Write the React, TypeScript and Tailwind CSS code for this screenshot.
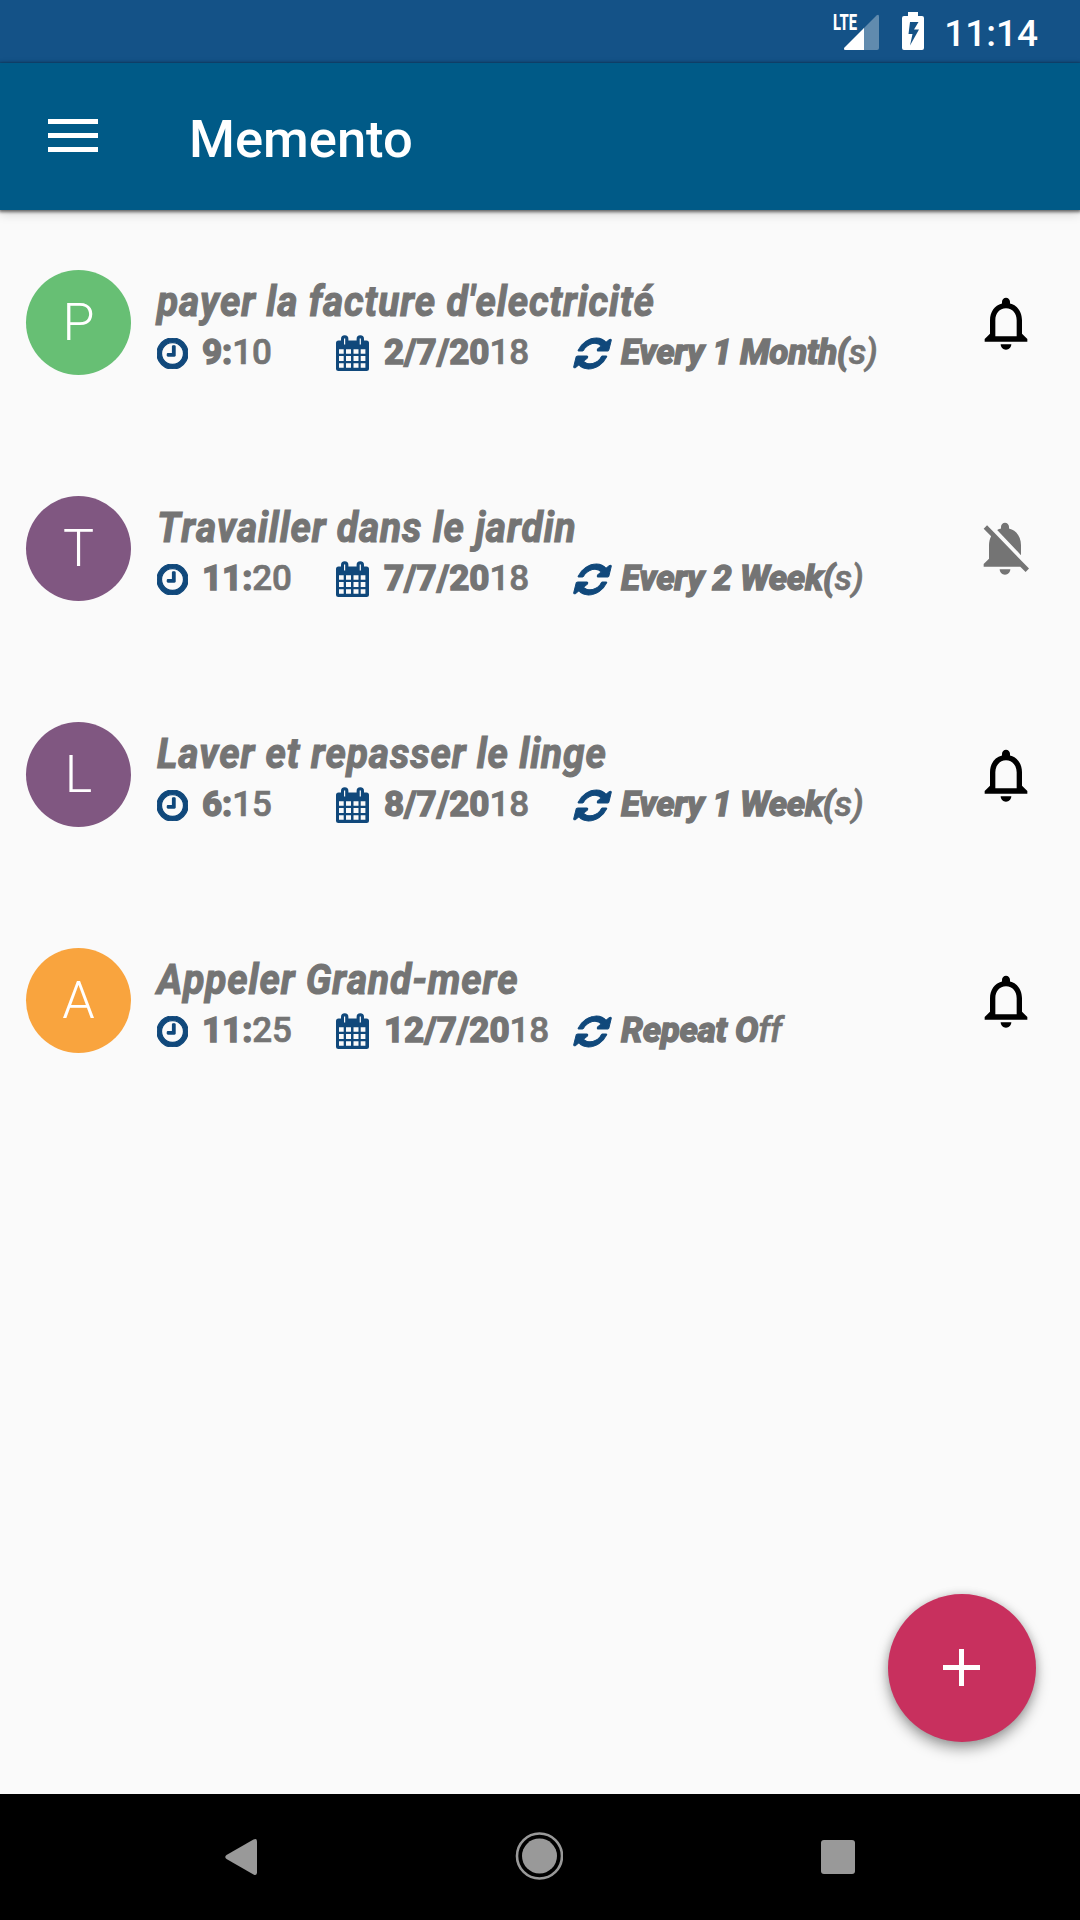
import React from 'react';

interface Reminder {
    id: number;
    letter: string;
    color: string;
    title: string;
    time: [string, string];
    date: [string, string];
    repeat: [string, string];
    active: boolean;
}

const reminders: Reminder[] = [
    { id: 1, letter: 'P', color: 'bg-[#67bf74]', title: "payer la facture d'electricité", time: ['9:', '10'], date: ['2/7/20', '18'], repeat: ['Every 1 Month(', 's)'], active: true },
    { id: 2, letter: 'T', color: 'bg-[#805781]', title: 'Travailler dans le jardin', time: ['11:', '20'], date: ['7/7/20', '18'], repeat: ['Every 2 Week(', 's)'], active: false },
    { id: 3, letter: 'L', color: 'bg-[#805781]', title: 'Laver et repasser le linge', time: ['6:', '15'], date: ['8/7/20', '18'], repeat: ['Every 1 Week(', 's)'], active: true },
    { id: 4, letter: 'A', color: 'bg-[#f9a43e]', title: 'Appeler Grand-mere', time: ['11:', '25'], date: ['12/7/20', '18'], repeat: ['Repeat O', 'ff'], active: true },
];

const ClockIcon = () => (
    <svg className="h-[31px] w-[31px] shrink-0" viewBox="0 128 1536 1536" fill="currentColor" stroke="currentColor" strokeWidth="60">
        <path d="M896 544v448q0 14-9 23t-23 9h-320q-14 0-23-9t-9-23v-64q0-14 9-23t23-9h224v-352q0-14 9-23t23-9h64q14 0 23 9t9 23zm416 352q0-148-73-273t-198-198-273-73-273 73-198 198-73 273 73 273 198 198 273 73 273-73 198-198 73-273zm224 0q0 209-103 385.5t-279.5 279.5-385.5 103-385.5-103-279.5-279.5-103-385.5 103-385.5 279.5-279.5 385.5-103 385.5 103 279.5 279.5 103 385.5z" />
    </svg>
);

const CalendarIcon = () => (
    <svg className="h-[36px] w-[33px] shrink-0" viewBox="0 0 33 36" fill="currentColor">
        <path
            fillRule="evenodd"
            d="M2.5 5.500H5V4a3.700 3.700 0 0 1 7.400 0v1.500H20.600V4a3.700 3.700 0 0 1 7.400 0v1.500H30.500A2.500 2.500 0 0 1 33 8V33.500A2.500 2.500 0 0 1 30.500 36H2.500A2.500 2.500 0 0 1 0 33.500V8A2.500 2.500 0 0 1 2.500 5.500ZM8 3.500v6h1.200v-6zM23.700 3.500v6h1.200v-6zM3 14.200v4.500h4.700v-4.500zM10 14.200v4.500h5v-4.500zM17.500 14.200v4.500h5v-4.500zM24.700 14.200v4.500h4.700v-4.500zM3 21v5h4.700v-5zM10 21v5h5v-5zM17.500 21v5h5v-5zM24.700 21v5h4.700v-5zM3 28.300v4.500h4.700v-4.500zM10 28.300v4.500h5v-4.500zM17.500 28.300v4.500h5v-4.500zM24.700 28.300v4.500h4.700v-4.500z"
        />
    </svg>
);

const RefreshIcon = () => (
    <svg className="h-[31px] w-[31px] shrink-0 -skew-x-[14deg] overflow-visible" viewBox="128 128 1536 1536" fill="currentColor" stroke="currentColor" strokeWidth="50">
        <path d="M1639 1056q0 5-1 7-64 268-268 434.500t-478 166.500q-146 0-282.500-55t-243.500-157l-129 129q-19 19-45 19t-45-19-19-45v-448q0-26 19-45t45-19h448q26 0 45 19t19 45-19 45l-137 137q71 66 161 102t187 36q134 0 250-65t186-179q11-17 53-117 8-23 30-23h192q13 0 22.500 9.500t9.500 22.500zm25-800v448q0 26-19 45t-45 19h-448q-26 0-45-19t-19-45 19-45l138-138q-148-137-349-137-134 0-250 65t-186 179q-11 17-53 117-8 23-30 23h-199q-13 0-22.500-9.500t-9.500-22.500v-7q65-268 270-434.500t480-166.500q146 0 284 55.500t245 156.500l130-129q19-19 45-19t45 19 19 45z" />
    </svg>
);

const BellIcon = () => (
    <svg className="mr-px h-16 w-16 text-black" viewBox="0 0 24 24" fill="currentColor">
        <path d="M12 22c1.100 0 2-.9 2-2h-4c0 1.100.9 2 2 2zm6-6v-5c0-3.070-1.630-5.640-4.500-6.320V4c0-.83-.67-1.500-1.500-1.500s-1.500.67-1.500 1.500v.68C7.640 5.360 6 7.920 6 11v5l-2 2v1h16v-1l-2-2zm-2 1H8v-6c0-2.480 1.510-4.500 4-4.500s4 2.020 4 4.500v6z" />
    </svg>
);

const BellOffIcon = () => (
    <svg className="mr-[2px] mb-[2px] h-16 w-16 text-[#747474]" viewBox="0 0 24 24" fill="currentColor">
        <path d="M20 18.690L7.840 6.140 5.270 3.490 4 4.760l2.800 2.800v.01c-.52.99-.8 2.160-.8 3.420v5l-2 2v1h13.730l2 2L21 19.720l-1-1.030zM12 22c1.110 0 2-.89 2-2h-4c0 1.110.89 2 2 2zm6-7.320V11c0-3.080-1.640-5.640-4.500-6.320V4c0-.83-.67-1.500-1.500-1.500s-1.500.67-1.500 1.500v.68c-.15.03-.29.08-.42.12-.1.03-.2.07-.3.11h-.01c-.01 0-.01 0-.02.01-.23.09-.46.2-.68.31 0 0-.01 0-.01.01L18 14.680z" />
    </svg>
);

// The first part is drawn heavier than the tail
const SplitText: React.FC<{ parts: [string, string] }> = ({ parts }) => (
    <>
        <span className="font-extrabold [-webkit-text-stroke:1.3px_#747474]">{parts[0]}</span>
        <span className="font-medium [-webkit-text-stroke:0.7px_#747474]">{parts[1]}</span>
    </>
);

const StatusBar = () => (
    <div className="flex h-[63px] items-start justify-end bg-[#145287] pr-[42px] text-white">
        <svg className="h-[63px] w-[46px]" viewBox="0 0 46 63" fill="currentColor">
            <path d="M46 16.500v31.500q0 2-2 2H30V29L43.500 15.500Q46 13.500 46 16.500Z" opacity="0.33" />
            <path d="M31 28V50H12.500Q10 50 11.500 47.500Z" />
            <text x="0" y="30" fontFamily="Roboto" fontWeight="800" fontSize="22.500" textLength="24" lengthAdjust="spacingAndGlyphs">LTE</text>
        </svg>
        <svg className="ml-[23px] mt-3 h-[38px] w-[22px]" viewBox="0 0 22 38" fill="currentColor">
            <path fillRule="evenodd" d="M6 0H16V4H20Q22 4 22 6V36Q22 38 20 38H2Q0 38 0 36V6Q0 4 2 4H6ZM8 10L6.500 22H10.500L8 33.500L17 17.500H12L16.500 10Z" />
        </svg>
        <span className="ml-[20px] mt-[11px] text-[37px] leading-[45px] font-medium">11:14</span>
    </div>
);

const AppBar = () => (
    <header className="relative z-10 flex h-[147px] items-center bg-[#005a87] pl-12 text-white shadow-[0_1px_3px_1px_rgba(0,0,0,0.55),0_4px_10px_rgba(0,0,0,0.15)]">
        <div className="mb-[2px] flex w-[50px] flex-col gap-[9px]">
            <div className="h-[5px] bg-white" />
            <div className="h-[5px] bg-white" />
            <div className="h-[5px] bg-white" />
        </div>
        <h1 className="ml-[91px] pt-[4px] text-[52.500px] leading-[62px] font-medium">Memento</h1>
    </header>
);

const ReminderRow: React.FC<{ item: Reminder }> = ({ item }) => (
    <li className="flex h-[226px] items-center pl-[26px] pr-[41px]">
        <div className={`mb-[2px] flex h-[105px] w-[105px] items-center justify-center rounded-full pt-px text-[52px] font-light text-white ${item.color}`}>{item.letter}</div>
        <div className="ml-[26px] flex-1 pt-[10px] text-[#747474]">
            <h2 className="origin-left scale-x-[0.925] text-[42px] leading-[50px] font-bold tracking-[0.95px] whitespace-nowrap italic [-webkit-text-stroke:1.1px_#747474] [font-kerning:none]">{item.title}</h2>
            <div className="flex h-[53px] items-center text-[35px] leading-[40px] tracking-[-0.1px] whitespace-nowrap text-[#747474]">
                <div className="flex w-[179px] items-center text-[#10487b]">
                    <ClockIcon />
                    <span className="ml-[14px] text-[#747474]"><SplitText parts={item.time} /></span>
                </div>
                <div className="flex w-[241px] items-center text-[#10487b]">
                    <CalendarIcon />
                    <span className="ml-[15px] text-[#747474]"><SplitText parts={item.date} /></span>
                </div>
                <div className="flex items-center text-[#10487b]">
                    <RefreshIcon />
                    <span className="ml-[13px] tracking-[-0.3px] text-[#747474] italic"><SplitText parts={item.repeat} /></span>
                </div>
            </div>
        </div>
        <button>{item.active ? <BellIcon /> : <BellOffIcon />}</button>
    </li>
);

const NavigationBar = () => (
    <nav className="flex h-[126px] items-center justify-between bg-black pl-[225px] pr-[225px] text-[#999]">
        <svg className="h-[36px] w-[32px]" viewBox="0 0 32 36" fill="currentColor">
            <path d="M28.500.6Q32-1 32 2.500V33.500Q32 37 28.500 35.400L1.500 20Q-1 18 1.500 16Z" />
        </svg>
        <svg className="mb-[2px] h-12 w-12" viewBox="0 0 48 48">
            <circle cx="24.500" cy="24" r="22.500" fill="none" stroke="currentColor" strokeWidth="2.600" />
            <circle cx="24.500" cy="24" r="17.500" fill="currentColor" />
        </svg>
        <div className="h-[34px] w-[34px] rounded-[3px] bg-[#999]" />
    </nav>
);

export default function App() {
    return (
        <div className="relative flex h-[1920px] w-[1080px] flex-col overflow-hidden bg-[#fafafa] font-['Roboto',sans-serif]">
            <StatusBar />
            <AppBar />
            <main className="flex-1">
                <ul>
                    {reminders.map(item => <ReminderRow key={item.id} item={item} />)}
                </ul>
            </main>
            <NavigationBar />
            <button className="absolute top-[1594px] left-[888px] flex h-[148px] w-[148px] items-center justify-center rounded-full bg-[#c8305e] pr-px pb-px shadow-[0_7px_14px_rgba(0,0,0,0.35),0_0_8px_rgba(0,0,0,0.15)]">
                <svg className="h-[37px] w-[37px]" viewBox="0 0 37 37" fill="white">
                    <path d="M16 0h5v16h16v5H21v16h-5V21H0v-5h16z" />
                </svg>
            </button>
        </div>
    );
}
